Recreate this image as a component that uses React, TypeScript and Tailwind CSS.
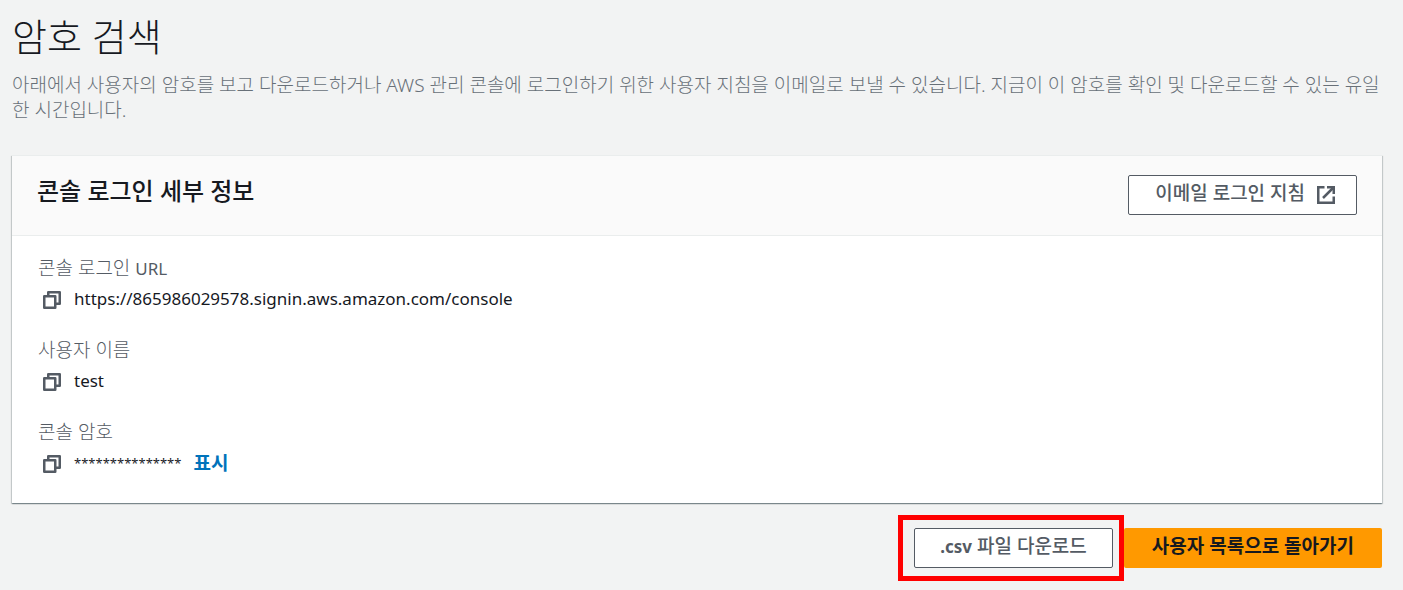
import type { ReactNode } from "react";

function CopyIcon() {
  return (
    <svg className="size-5" viewBox="0 0 20 20" fill="none" stroke="currentColor" strokeWidth="2.5" strokeLinejoin="round" aria-hidden="true">
      <path d="M2.25 6.25H13.25V17.75H2.25Z" />
      <path d="M6.25 6V2.25H17.75V13.75H13.5" />
    </svg>
  );
}

function ExternalIcon() {
  return (
    <svg className="mt-1 size-5" viewBox="0 0 20 20" fill="none" stroke="currentColor" strokeWidth="2.5" aria-hidden="true">
      <path d="M8.5 2.25H2.25V17.75H17.75V11.5" />
      <path d="M11 2.25H17.75V9" />
      <path d="M17.5 2.5L7 13" />
    </svg>
  );
}

function Latin({ children }: { children: ReactNode }) {
  return <span className="text-[17px] font-normal">{children}</span>;
}

function Field({ label, name, children }: { label: ReactNode; name: string; children: ReactNode }) {
  return (
    <div>
      <dt className="text-[19px] leading-[31px] font-light text-[#545b64]">{label}</dt>
      <dd className="flex h-[31px] items-center text-[17px] leading-[29px] text-[#16191f]">
        <button type="button" aria-label={`${name} 복사`} className="mr-3 ml-1 text-[#545b64]">
          <CopyIcon />
        </button>
        {children}
      </dd>
    </div>
  );
}

export default function App() {
  return (
    <main className="min-h-screen bg-[#f2f3f3] pt-[11px] pr-[21px] pb-2 pl-3 font-['Noto_Sans','Noto_Sans_CJK_KR',sans-serif] text-[#16191f]">
      <h1 className="text-[38px] leading-[50px] font-light">암호 검색</h1>
      <p className="mt-3 text-[19px] leading-[25px] font-light text-[#687078]">
        아래에서 사용자의 암호를 보고 다운로드하거나 AWS 관리 콘솔에 로그인하기 위한 사용자 지침을 이메일로 보낼 수 있습니다. 지금이 이 암호를 확인 및 다운로드할 수 있는 유일한 시간입니다.
      </p>
      <section className="mt-8 border-t border-[#eaeded] bg-white shadow-[0_1px_1px_0_rgba(0,28,36,0.3),1px_1px_1px_0_rgba(0,28,36,0.15),-1px_1px_1px_0_rgba(0,28,36,0.15)]">
        <header className="flex items-start justify-between border-b border-[#eaeded] bg-[#fafafa] px-[25px] pt-[19px] pb-5">
          <h2 className="text-[24px] leading-8 font-medium">콘솔 로그인 세부 정보</h2>
          <button type="button" className="flex h-10 items-center gap-[11px] rounded-[2px] border border-[#545b64] bg-white pr-5 pb-1 pl-[26px] text-[19px] font-medium text-[#545b64]">
            이메일 로그인 지침
            <ExternalIcon />
          </button>
        </header>
        <dl className="flex flex-col gap-5 px-[26px] pt-[17px] pb-6">
          <Field name="콘솔 로그인 URL" label={<>콘솔 로그인 <Latin>URL</Latin></>}>
            <span className="pb-[2px]">https://865986029578.signin.aws.amazon.com/console</span>
          </Field>
          <Field name="사용자 이름" label="사용자 이름">
            <span className="pb-[2px]">test</span>
          </Field>
          <Field name="콘솔 암호" label="콘솔 암호">
            <span className="text-[13px]">***************</span>
            <button type="button" className="ml-3 text-[19px] font-bold text-[#0073bb]">표시</button>
          </Field>
        </dl>
      </section>
      <div className="mt-[25px] flex justify-end gap-[11px]">
        <div className="relative">
          <button type="button" className="h-10 rounded-[2px] border border-[#545b64] bg-white px-[25px] pb-1 text-[19px] leading-8 font-medium text-[#545b64]">
            <span className="text-[17px] font-bold">.csv</span> 파일 다운로드
          </button>
          <div className="pointer-events-none absolute -top-[13px] -right-[11px] -bottom-[13px] -left-4 border-[5px] border-[#ff0000]" />
        </div>
        <button type="button" className="h-10 rounded-[2px] bg-[#ff9900] px-7 pb-1 text-[19px] leading-8 font-bold text-[#16191f]">
          사용자 목록으로 돌아가기
        </button>
      </div>
    </main>
  );
}
